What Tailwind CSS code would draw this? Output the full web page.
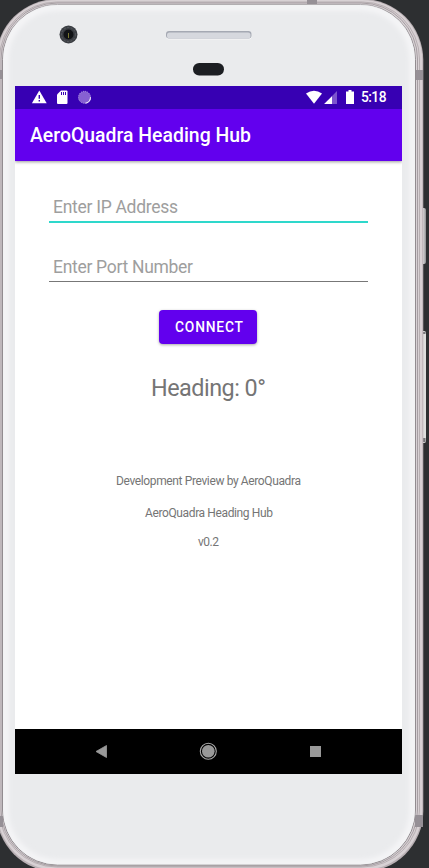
<!DOCTYPE html>
<html lang="en">
<head>
<meta charset="utf-8">
<title>AeroQuadra Heading Hub</title>
<script src="https://cdn.jsdelivr.net/npm/@tailwindcss/browser@4"></script>
</head>
<body class="relative w-[429px] h-[868px] overflow-hidden bg-[#2d2f31] font-['Roboto',sans-serif]">
<!-- Phone shell -->
<svg class="absolute inset-0" width="429" height="868" viewBox="0 0 429 868">
  <defs>
    <linearGradient id="key" x1="0" x2="1"><stop offset="0" stop-color="#a8a5a8"/><stop offset=".5" stop-color="#dedddd"/><stop offset="1" stop-color="#8d8d90"/></linearGradient>
    <filter id="soft" x="-10%" y="-10%" width="120%" height="120%"><feGaussianBlur stdDeviation="2.500"/></filter>
    <clipPath id="faceClip"><rect x="3" y="4.500" width="412" height="860" rx="55"/></clipPath>
  </defs>
  <rect x="420" y="208" width="6" height="56" rx="2" fill="url(#key)"/>
  <rect x="420" y="331" width="6" height="112" rx="2" fill="#dededd"/>
  <path d="M423 332h2.500v2H423zM423 438h2.500v4H423z" fill="#77777a"/>
  <rect x="-4" y="-1" width="427.300" height="873" rx="61" fill="#b9b0b4"/>
  <rect x="-3" y="0" width="425.300" height="870" rx="60" fill="#d8d1d4"/>
  <rect x="-.5" y="2" width="420" height="865" rx="57" fill="none" stroke="#aea6a9" stroke-width=".8"/>
  <rect x="1" y="3" width="416.500" height="863" rx="56" fill="#d8d2d5" stroke="#999195" stroke-width=".8"/>
  <path d="M307 0h10v4h-10zM0 70h3v9H0zM415 70h8v10h-8zM0 816h3v11H0zM415 815h8v12h-8z" fill="#969096"/>
  <rect x="2.500" y="4.500" width="413" height="860.500" rx="55" fill="#eaebed" stroke="#928c90"/>
  <g clip-path="url(#faceClip)"><rect x="5" y="7" width="408" height="856" rx="53" fill="none" stroke="#f5f5f7" stroke-width="7" filter="url(#soft)"/></g>
  <circle cx="68.500" cy="34.500" r="9" fill="#3b3e43"/>
  <circle cx="68.500" cy="34.500" r="7" fill="none" stroke="#5a5d62" stroke-dasharray="2 1.500"/>
  <circle cx="68.500" cy="34.500" r="5" fill="#111316"/>
  <path d="M68.500 33v5" stroke="#77762f"/>
  <rect x="166" y="31" width="85.500" height="8.500" rx="3" fill="#f7f7f8"/>
  <rect x="166" y="31" width="85.500" height="7.500" rx="3" fill="#a5a9b3"/>
  <rect x="167" y="32.500" width="83.500" height="6" rx="2.500" fill="#d6d8de"/>
  <rect x="193" y="63" width="31" height="12.500" rx="6.200" fill="#1c1e22"/>
</svg>

<div class="relative w-full pl-[15px] pt-[86px]">
  <div class="w-[387px] h-[688px] flex flex-col bg-white">
    <div class="h-[23px] shrink-0 bg-[#3700b3] flex items-center text-white">
      <svg width="387" height="23" viewBox="15 86 387 23" fill="#fff">
        <path d="M39.300 90.500 46.700 103.300h-14.800z"/>
        <path d="M38.600 95h1.400v3.700h-1.400zM38.600 100h1.400v1.500h-1.400z" fill="#3700b3"/>
        <path d="M61 90.500h5.500q1 0 1 1V103q0 1-1 1H58q-1 0-1-1v-8.500z"/>
        <path d="M61 92h1v3h-1zM63 92h1v3H63zM65 92h1v3h-1z" fill="#3700b3"/>
        <circle cx="84.500" cy="97.300" r="6" fill="#8660d2"/>
        <circle cx="84.500" cy="97.300" r="6" fill="none" stroke="#b7a1e4" stroke-dasharray="1 1"/>
        <path d="M90.500 97.300a6 6 0 0 1-5 6" fill="none" stroke="#f0eafa" stroke-width="1.100"/>
        <path d="M306 93.500q8-5.300 16 0l-8 10.200z"/>
        <path d="M337 91v13h-12.800z" fill="#7d54ce"/>
        <path d="M332 96.200V104h-7.800z"/>
        <path d="M348.500 90h3v1.500h2.500V104h-8V91.500h2.500z"/>
        <text x="361" y="102.300" font-size="13.800" font-weight="500" textLength="25.500">5:18</text>
      </svg>
    </div>
    <header class="relative h-[52px] shrink-0 bg-[#6200ee] flex items-center pl-[15px] shadow-[0_1px_3px_rgba(0,0,0,0.4)] [clip-path:inset(0_0_-6px_0)]">
      <h1 class="text-white text-[19.4px] font-medium leading-none whitespace-nowrap"><svg class="block overflow-visible" width="222" height="22"><text x="0" y="17.500" fill="#fff" textLength="221">AeroQuadra Heading Hub</text></svg></h1>
    </header>
    <main class="flex-1 flex flex-col items-center text-[#757575]">
      <div class="mt-[31px] w-[319px] h-[31px] border-b-2 border-[#2ed8cb] pl-1 text-[17.5px]"><svg class="block overflow-visible" width="126" height="28"><text x="0" y="21" fill="#9e9e9e" textLength="125">Enter IP Address</text></svg></div>
      <div class="mt-[29px] w-[319px] h-[30px] border-b border-[#777] pl-1 text-[17.5px]"><svg class="block overflow-visible" width="141" height="28"><text x="0" y="21" fill="#9e9e9e" textLength="140">Enter Port Number</text></svg></div>
      <button class="mt-[28px] mr-px w-[98px] h-[34px] rounded-[4px] bg-[#6200ee] flex items-center justify-center shadow-[0_1px_3px_rgba(0,0,0,0.35)] text-[13.8px] font-medium"><svg class="block overflow-visible" width="67" height="20"><text x="0" y="15" fill="#fff" textLength="68">CONNECT</text></svg></button>
      <div class="mt-[28px] h-[32px] text-[23.400px]"><svg class="block overflow-visible" width="115" height="32"><text x="0" y="24" fill="#757575" textLength="115">Heading: 0°</text></svg></div>
      <div class="mt-[69px] h-[16px] text-[12px]"><svg class="block overflow-visible" width="185" height="16"><text x="0" y="12" fill="#757575" textLength="185">Development Preview by AeroQuadra</text></svg></div>
      <div class="mt-[16px] h-[16px] text-[12px]"><svg class="block overflow-visible" width="128" height="16"><text x="0" y="12" fill="#757575" textLength="128">AeroQuadra Heading Hub</text></svg></div>
      <div class="mt-[13px] h-[16px] text-[12px]"><svg class="block overflow-visible" width="21" height="16"><text x="0" y="12" fill="#757575" textLength="21">v0.2</text></svg></div>
    </main>
    <nav class="h-[45px] shrink-0 bg-black">
      <svg width="387" height="45" viewBox="15 729 387 45">
        <path d="M96 751.500 106.500 745.500v12z" fill="#999" stroke="#999" stroke-linejoin="round" stroke-width=".8"/>
        <circle cx="208.300" cy="751.300" r="6.300" fill="#999"/>
        <circle cx="208.300" cy="751.300" r="8" fill="none" stroke="#aaa" stroke-width="1.100"/>
        <path d="M310 746h11v11h-11z" fill="#999"/>
      </svg>
    </nav>
  </div>
</div>
</body>
</html>
